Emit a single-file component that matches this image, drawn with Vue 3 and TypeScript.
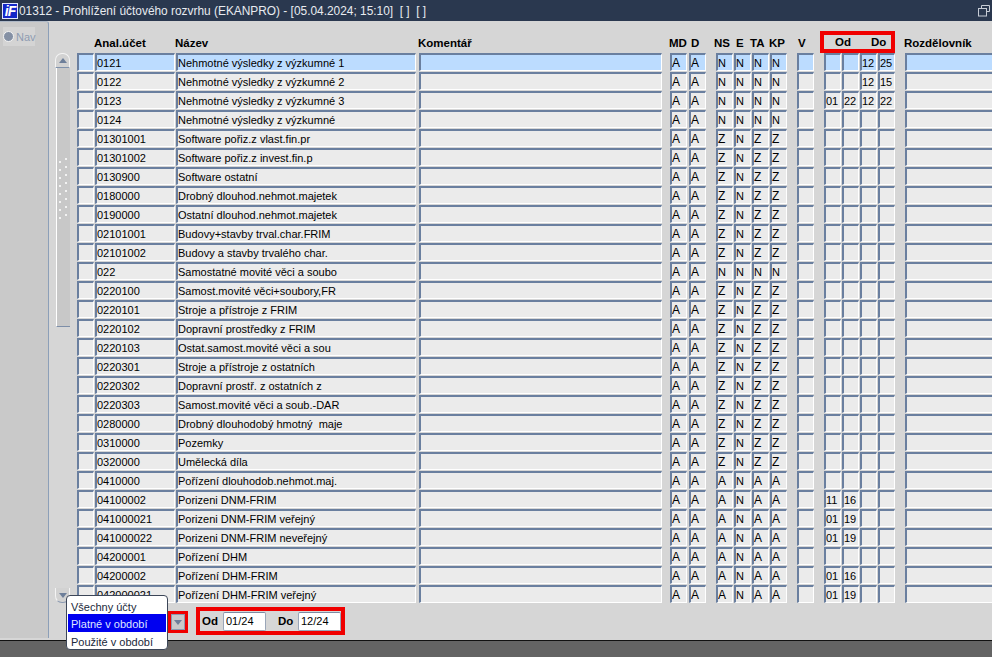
<script setup lang="ts">
interface Row {
  code: string
  name: string
  flags: string
  dates: [string, string, string, string]
}

const e4: [string, string, string, string] = ['', '', '', '']
const rows: Row[] = [
  { code: '0121', name: 'Nehmotné výsledky z výzkumné 1', flags: 'NNNN', dates: ['', '', '12', '25'] },
  { code: '0122', name: 'Nehmotné výsledky z výzkumné 2', flags: 'NNNN', dates: ['', '', '12', '15'] },
  { code: '0123', name: 'Nehmotné výsledky z výzkumné 3', flags: 'NNNN', dates: ['01', '22', '12', '22'] },
  { code: '0124', name: 'Nehmotné výsledky z výzkumné', flags: 'NNNN', dates: e4 },
  { code: '01301001', name: 'Software pořiz.z vlast.fin.pr', flags: 'ZNZZ', dates: e4 },
  { code: '01301002', name: 'Software pořiz.z invest.fin.p', flags: 'ZNZZ', dates: e4 },
  { code: '0130900', name: 'Software ostatní', flags: 'ZNZZ', dates: e4 },
  { code: '0180000', name: 'Drobný dlouhod.nehmot.majetek', flags: 'ZNZZ', dates: e4 },
  { code: '0190000', name: 'Ostatní dlouhod.nehmot.majetek', flags: 'ZNZZ', dates: e4 },
  { code: '02101001', name: 'Budovy+stavby trval.char.FRIM', flags: 'ZNZZ', dates: e4 },
  { code: '02101002', name: 'Budovy a stavby trvalého char.', flags: 'ZNZZ', dates: e4 },
  { code: '022', name: 'Samostatné movité věci a soubo', flags: 'NNNN', dates: e4 },
  { code: '0220100', name: 'Samost.movité věci+soubory,FR', flags: 'ZNZZ', dates: e4 },
  { code: '0220101', name: 'Stroje a přístroje z FRIM', flags: 'ZNZZ', dates: e4 },
  { code: '0220102', name: 'Dopravní prostředky z FRIM', flags: 'ZNZZ', dates: e4 },
  { code: '0220103', name: 'Ostat.samost.movité věci a sou', flags: 'ZNZZ', dates: e4 },
  { code: '0220301', name: 'Stroje a přístroje z ostatních', flags: 'ZNZZ', dates: e4 },
  { code: '0220302', name: 'Dopravní prostř. z ostatních z', flags: 'ZNZZ', dates: e4 },
  { code: '0220303', name: 'Samost.movité věci a soub.-DAR', flags: 'ZNZZ', dates: e4 },
  { code: '0280000', name: 'Drobný dlouhodobý hmotný  maje', flags: 'ZNZZ', dates: e4 },
  { code: '0310000', name: 'Pozemky', flags: 'ZNZZ', dates: e4 },
  { code: '0320000', name: 'Umělecká díla', flags: 'ZNZZ', dates: e4 },
  { code: '0410000', name: 'Pořízení dlouhodob.nehmot.maj.', flags: 'ANAA', dates: e4 },
  { code: '04100002', name: 'Porizeni DNM-FRIM', flags: 'ANAA', dates: ['11', '16', '', ''] },
  { code: '041000021', name: 'Porizeni DNM-FRIM veřejný', flags: 'ANAA', dates: ['01', '19', '', ''] },
  { code: '041000022', name: 'Porizeni DNM-FRIM neveřejný', flags: 'ANAA', dates: ['01', '19', '', ''] },
  { code: '04200001', name: 'Pořízení DHM', flags: 'ANAA', dates: e4 },
  { code: '04200002', name: 'Pořízení DHM-FRIM', flags: 'ANAA', dates: ['01', '16', '', ''] },
  { code: '042000021', name: 'Pořízení DHM-FRIM veřejný', flags: 'ANAA', dates: ['01', '19', '', ''] },
]

const flagClasses = ['c-ns', 'c-e', 'c-ta', 'c-kp']
const dateClasses = ['c-o1', 'c-o2', 'c-d1', 'c-d2']
const gripDots = Array.from({ length: 16 }, (_, i) => i)
</script>

<template>
  <div class="app">
    <header class="title">
      <span class="logo">iF</span>
      <span class="title-text">01312 - Prohlížení účtového rozvrhu (EKANPRO) - [05.04.2024; 15:10]&nbsp; [ ]&nbsp; [ ]</span>
      <svg class="restore" width="12" height="12" viewBox="0 0 12 12">
        <path d="M3.5 3V.5h8v6H9" fill="none" stroke="#c6ccd6" />
        <rect x=".5" y="3.5" width="8" height="7.5" fill="none" stroke="#c6ccd6" />
      </svg>
    </header>

    <div class="body">
      <aside class="nav">
        <div class="nav-item">
          <span class="radio"></span>
          <span>Nav</span>
        </div>
      </aside>

      <main class="work">
        <div class="table-area">
          <div class="scroll">
            <button class="scroll-btn up"><span class="tri-up"></span></button>
            <div class="thumb">
              <div class="grip">
                <i v-for="d in gripDots" :key="d"></i>
              </div>
            </div>
            <div class="rail"></div>
            <button class="scroll-btn down"><span class="tri-down"></span></button>
          </div>

          <div class="table">
            <div class="head">
              <span class="h-anal">Anal.účet</span>
              <span class="h-name">Název</span>
              <span class="h-kom">Komentář</span>
              <span class="h-md">MD</span>
              <span class="h-d">D</span>
              <span class="h-ns">NS</span>
              <span class="h-e">E</span>
              <span class="h-ta">TA</span>
              <span class="h-kp">KP</span>
              <span class="h-v">V</span>
              <span class="h-range"><span>Od</span><span>Do</span></span>
              <span class="h-roz">Rozdělovník</span>
            </div>

            <div v-for="(r, i) in rows" :key="r.code" class="row" :class="{ selected: i === 0 }">
              <div class="cell c-sel"></div>
              <div class="cell c-anal">{{ r.code }}</div>
              <div class="cell c-name">{{ r.name }}</div>
              <div class="cell c-kom"></div>
              <div class="cell c-md big">A</div>
              <div class="cell c-d big">A</div>
              <div
                v-for="(f, k) in r.flags.split('')"
                :key="k"
                class="cell"
                :class="[flagClasses[k], { big: f !== 'N' }]"
              >{{ f }}</div>
              <div class="cell c-v"></div>
              <div v-for="(d, k) in r.dates" :key="k" class="cell" :class="dateClasses[k]">{{ d }}</div>
              <div class="cell c-roz"></div>
            </div>
          </div>
        </div>

        <div class="footer">
          <div class="combo">
            <ul class="popup">
              <li>Všechny účty</li>
              <li class="active">Platné v období</li>
              <li>Použité v období</li>
            </ul>
            <div class="combo-mark">
              <button class="combo-btn"><span class="tri-down"></span></button>
            </div>
          </div>
          <div class="range">
            <label class="first">Od</label>
            <input value="01/24" />
            <label class="second">Do</label>
            <input value="12/24" />
          </div>
        </div>
      </main>
    </div>

    <div class="statusbar"></div>
  </div>
</template>

<style>
html, body { margin: 0; overflow: hidden; }
</style>

<style scoped>
.app {
  width: 992px;
  height: 657px;
  overflow: hidden;
  display: flex;
  flex-direction: column;
  background: #d6d6d6;
  font: 11px "Liberation Sans", Arial, sans-serif;
  color: #000;
}
.title {
  height: 21px;
  flex: none;
  display: flex;
  align-items: center;
  background: #2a384f;
  color: #e8ebf0;
  font-size: 11.9px;
  padding-left: 2px;
}
.logo {
  width: 16px;
  height: 16px;
  box-sizing: border-box;
  background: #1327c8;
  border: 1px solid #dfe6ff;
  color: #fff;
  font: italic bold 14px/14px "Liberation Sans", sans-serif;
  text-align: center;
  letter-spacing: -1px;
  margin-right: 1px;
}
.title-text { white-space: pre; }
.restore { margin-left: auto; margin-right: 2px; }

.body {
  flex: 1;
  min-height: 0;
  display: flex;
}
.nav {
  width: 48px;
  flex: none;
  background: #c9c9c9;
  border-right: 1px solid #8c9fb8;
  border-top: 1px solid #aeb8c6;
  border-top-right-radius: 3px;
  padding-top: 5px;
  margin-bottom: 2px;
  color: #8e9cb2;
}
.nav-item {
  margin-left: 3px;
  width: 32px;
  height: 19px;
  display: flex;
  align-items: center;
  gap: 2px;
  background: #d4d4d4;
}
.radio {
  width: 9px;
  height: 9px;
  flex: none;
  border-radius: 50%;
  background: #8490a4;
  border: 1px solid #f4f4f4;
}

.work {
  flex: 1;
  min-width: 0;
  display: flex;
  flex-direction: column;
}
.table-area {
  display: flex;
  padding-top: 10px;
}
.scroll {
  width: 15px;
  margin-left: 6px;
  margin-top: 22px;
  margin-right: 7px;
  flex: none;
  display: flex;
  flex-direction: column;
  height: 550px;
}
.scroll-btn {
  display: flex;
  align-items: center;
  justify-content: center;
  width: 15px;
  height: 15px;
  padding: 0;
  flex: none;
  background: #d2d2d2;
  border: 1px solid #f4f4f4;
}
.scroll-btn.up {
  border-radius: 7px 7px 0 0;
  border-bottom-color: #8092ac;
}
.scroll-btn.down {
  border-radius: 0 0 7px 7px;
  border-top: 0;
  border-bottom-color: #8c9bb2;
}
.tri-up, .tri-down {
  width: 0;
  height: 0;
  border-left: 4px solid transparent;
  border-right: 4px solid transparent;
}
.tri-up { border-bottom: 5px solid #6e7f9a; }
.tri-down { border-top: 5px solid #6e7f9a; }
.thumb {
  height: 259px;
  flex: none;
  box-sizing: border-box;
  margin-left: 1px;
  background: #c8c8c8;
  border-left: 1px solid #fff;
  border-bottom: 1px solid #7d8ea8;
  padding-top: 93px;
  padding-left: 2px;
}
.grip {
  width: 8px;
  display: grid;
  grid-template-columns: 2px 2px;
  column-gap: 4px;
  row-gap: 6px;
}
.grip i {
  width: 2px;
  height: 2px;
  background: #f2f2f2;
}
.grip i:nth-child(2n) { margin-top: -3px; }
.rail { flex: 1; }

.table { flex: none; width: 915px; }
.head {
  display: flex;
  height: 22px;
  align-items: center;
  font-weight: bold;
  font-size: 11.5px;
  white-space: nowrap;
  padding-left: 17px;
}
.head > span { display: block; box-sizing: border-box; flex: none; padding-top: 2px; }
.head > .h-anal { width: 81px; }
.head > .h-name { width: 243px; }
.head > .h-kom { width: 251px; }
.head > .h-md { width: 22px; }
.head > .h-d { width: 23px; }
.head > .h-ns { width: 22px; }
.head > .h-e { width: 14px; }
.head > .h-ta { width: 19px; }
.head > .h-kp { width: 29px; }
.head > .h-v { width: 22px; }
.head > .h-roz { margin-left: 9px; }
.head > .h-range {
  width: 75px;
  height: 22px;
  padding: 0 0 0 11px;
  display: flex;
  align-items: center;
  gap: 20px;
  border: 4px solid #f00000;
}
.row {
  display: flex;
  height: 18px;
  margin-bottom: 1px;
}
.cell {
  height: 18px;
  box-sizing: border-box;
  flex: none;
  background: #ebebeb;
  border-top: 2px solid #6a7f9f;
  border-left: 2px solid #6a7f9f;
  border-right: 1px solid #fff;
  border-bottom: 1px solid #fff;
  line-height: 17px;
  white-space: pre;
  overflow: hidden;
}
.cell.big { font-size: 12px; }
.row.selected .cell { background: #bcdcff; }

.c-sel { width: 17px; }
.c-anal { width: 80px; margin-left: 1px; }
.c-name { width: 240px; margin-left: 1px; }
.c-kom { width: 243px; margin-left: 3px; }
.c-md { width: 17px; margin-left: 8px; }
.c-d { width: 17px; margin-left: 2px; }
.c-ns { width: 17px; margin-left: 10px; }
.c-e, .c-ta, .c-kp, .c-o2, .c-d1, .c-d2 { width: 17px; margin-left: 1px; }
.c-v { width: 17px; margin-left: 10px; }
.c-o1 { width: 17px; margin-left: 10px; }
.c-roz { width: 88px; margin-left: 10px; }

.footer {
  display: flex;
  align-items: flex-start;
  margin-left: 6px;
  margin-top: 1px;
}
.combo {
  position: relative;
  width: 119px;
  flex: none;
}
.popup {
  position: absolute;
  left: 11px;
  top: -10px;
  width: 102px;
  height: 55px;
  box-sizing: border-box;
  margin: 0;
  padding: 1px;
  list-style: none;
  background: #fff;
  border: 1px solid #3c4658;
  border-radius: 4px;
  z-index: 2;
}
.popup li {
  height: 17px;
  line-height: 21px;
  padding-left: 3px;
  color: #20283a;
  white-space: nowrap;
}
.popup li.active { background: #0000f0; color: #dfe6ff; height: 18px; }
.combo-mark {
  position: absolute;
  left: 113px;
  top: 6px;
  width: 20px;
  height: 22px;
  box-sizing: border-box;
  border: 3px solid #f00000;
}
.combo-btn {
  width: 14px;
  height: 16px;
  padding: 0;
  display: flex;
  align-items: center;
  justify-content: center;
  background: #c9c9c9;
  border: 1px solid #8b9ab0;
}
.range {
  margin-left: 22px;
  margin-top: 2px;
  width: 149px;
  height: 28px;
  box-sizing: border-box;
  display: flex;
  align-items: center;
  border: 4px solid #f00000;
  font-weight: bold;
  font-size: 11.5px;
  padding-left: 2px;
}
.range .first { width: 21px; }
.range .second { width: 20px; margin-left: 12px; }
.range input {
  width: 43px;
  height: 19px;
  box-sizing: border-box;
  padding: 0 2px;
  border: 1px solid #9aa6b8;
  border-top-color: #7c8ba3;
  border-radius: 2px;
  background: #fff;
  font: 11px "Liberation Sans", Arial, sans-serif;
  color: #000;
  outline: none;
}

.statusbar {
  flex: none;
  height: 17px;
  box-sizing: border-box;
  background: #646464;
  border-top: 1px solid #111;
}
</style>
